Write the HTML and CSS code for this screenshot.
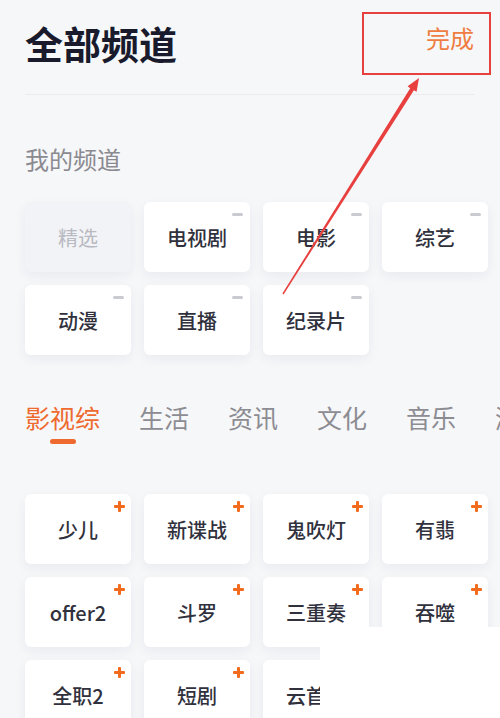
FILE: index.html
```html
<!DOCTYPE html>
<html lang="zh-CN">
<head>
	<meta charset="UTF-8">
	<title>全部频道</title>
	<link rel="stylesheet" href="styles.css">
</head>
<body>
<div class="page">
	<div class="header">
		<h1 class="title">全部频道</h1>
		<span class="done">完成</span>
	</div>
	<div class="divider"></div>

	<div class="section-title">我的频道</div>
	<div class="grid mine">
		<div class="card fixed">精选</div>
		<div class="card">电视剧<i class="minus"></i></div>
		<div class="card">电影<i class="minus"></i></div>
		<div class="card">综艺<i class="minus"></i></div>
		<div class="card">动漫<i class="minus"></i></div>
		<div class="card">直播<i class="minus"></i></div>
		<div class="card">纪录片<i class="minus"></i></div>
	</div>

	<div class="tabs">
		<div class="tab active">影视综</div>
		<div class="tab">生活</div>
		<div class="tab">资讯</div>
		<div class="tab">文化</div>
		<div class="tab">音乐</div>
		<div class="tab">游戏</div>
	</div>

	<div class="grid more">
		<div class="card">少儿<i class="plus"></i></div>
		<div class="card">新谍战<i class="plus"></i></div>
		<div class="card">鬼吹灯<i class="plus"></i></div>
		<div class="card">有翡<i class="plus"></i></div>
		<div class="card">offer2<i class="plus"></i></div>
		<div class="card">斗罗<i class="plus"></i></div>
		<div class="card">三重奏<i class="plus"></i></div>
		<div class="card">吞噬<i class="plus"></i></div>
		<div class="card">全职2<i class="plus"></i></div>
		<div class="card">短剧<i class="plus"></i></div>
		<div class="card">云首发<i class="plus"></i></div>
		<div class="card">动画<i class="plus"></i></div>
	</div>
</div>

<!-- 标注：红框 + 箭头 -->
<div class="mark-box"></div>
<svg class="mark-arrow" width="500" height="718" viewBox="0 0 500 718">
	<polygon points="282.4,293.6 410.2,88.2 407.6,86.2 419,78 416.6,91.8 413.9,90.2 283.6,294.4" fill="#e8403f"/>
</svg>
<div class="cover"></div>
</body>
</html>
```

FILE: styles.css
```css
html,body{margin:0;padding:0}
body{
	background:#f6f7f9;
	font-family:"Noto Sans CJK SC","Noto Sans",sans-serif;
	color:#2a2b38;
	width:500px;height:718px;overflow:hidden;
	position:relative;
}
.page{padding:0 12px 0 25px}

.header{display:flex;justify-content:space-between;align-items:flex-start;padding-top:24px}
.title{margin:0;font-size:38px;line-height:38px;font-weight:700;color:#191a2c}
.done{font-size:24px;line-height:24px;color:#ef7d42;margin:2px 14px 0 0}
.divider{height:1px;background:#ececef;margin:32px 13px 0 0}

.section-title{margin-top:52px;font-size:24px;line-height:24px;color:#8a8a90}

.grid{display:grid;grid-template-columns:repeat(4,106px);grid-auto-rows:70px;gap:13px}
.mine{margin-top:31px}
.more{margin-top:50px}

.card{
	position:relative;
	background:#fff;
	border-radius:6px;
	box-shadow:0 4px 12px rgba(30,35,60,.06);
	display:flex;align-items:center;justify-content:center;
	font-size:20px;font-weight:500;color:#30313d;
}
.card.fixed{background:#f2f3f6;color:#b8b9c1;font-weight:400}

.minus{position:absolute;top:11px;right:7px;width:11px;height:3px;border-radius:2px;background:#cacbd0}
.plus{position:absolute;top:7px;right:6px;width:11px;height:11px}
.plus:before,.plus:after{content:"";position:absolute;background:#f26a1b;border-radius:1px}
.plus:before{left:0;top:4px;width:11px;height:3px}
.plus:after{left:4px;top:0;width:3px;height:11px}

.tabs{display:flex;gap:39px;margin-top:50px;white-space:nowrap}
.tab{font-size:25px;line-height:25px;color:#8c8c92;display:flex;flex-direction:column;align-items:center;flex-shrink:0}
.tab.active{color:#ef6a2e}
.tab.active:after{content:"";width:26px;height:5px;border-radius:3px;background:#ef6a2e;margin-top:9px}

.mark-box{position:absolute;left:362px;top:12px;width:129px;height:63px;box-sizing:border-box;border:2px solid #e8403f}
.mark-arrow{position:absolute;left:0;top:0}
.cover{position:absolute;left:320px;top:627px;right:0;bottom:0;background:#fff}
```
